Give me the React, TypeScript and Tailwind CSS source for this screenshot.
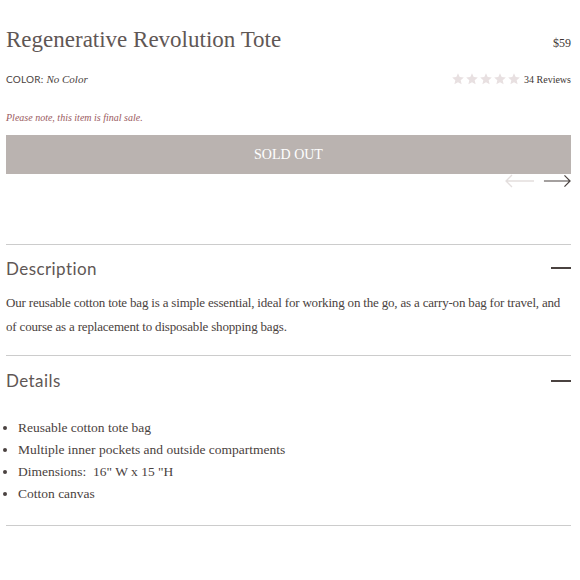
import type { JSX } from "react";

const serif = "font-['Liberation_Serif',serif]";
const sans = "font-['Lato',sans-serif]";

const Star = (): JSX.Element => (
	<svg viewBox="0 0 24 24" className="h-[14px] w-[14px]" fill="#e8e0e1">
		<path d="M12 2l2.9 6.6 7.1.7-5.4 4.8 1.6 7-6.2-3.7-6.2 3.7 1.6-7L2 9.3l7.1-.7z" />
	</svg>
);

const Minus = (): JSX.Element => <span className="block h-[2px] w-[20px] bg-[#4a4240]" />;

const details = ["Reusable cotton tote bag", "Multiple inner pockets and outside compartments", 'Dimensions:  16" W x 15 "H', "Cotton canvas"];

export default function App(): JSX.Element {
	return (
		<div className="h-[580px] w-[580px] bg-white pl-[6px] pr-[9px] pt-[26px] text-[#5a5250]">
			<div className="flex items-start justify-between">
				<h1 className={`${serif} text-[23px] leading-[28px] text-[#5f5755]`}>Regenerative Revolution Tote</h1>
				<span className={`${serif} mt-[8px] text-[12px] text-[#3d3533]`}>$59</span>
			</div>

			<div className="mt-[17px] flex items-center justify-between">
				<p className={`${sans} text-[10px] tracking-wide text-[#4a4240]`}>
					COLOR: <span className={`${serif} text-[11px] italic tracking-normal`}>No Color</span>
				</p>
				<div className="flex items-center gap-[3px]">
					<div className="flex">
						<Star />
						<Star />
						<Star />
						<Star />
						<Star />
					</div>
					<span className={`${serif} text-[10px] text-[#3d3533]`}>34 Reviews</span>
				</div>
			</div>

			<p className={`${serif} mt-[22px] text-[10px] italic text-[#9a5a5e]`}>Please note, this item is final sale.</p>

			<button className={`${serif} mt-[10px] flex h-[39px] w-full items-center justify-center bg-[#bab3b0] text-[14px] text-white`}>SOLD OUT</button>

			<div className="flex justify-end gap-[8px]">
				<svg viewBox="0 0 30 14" className="h-[14px] w-[30px]" fill="none" stroke="#e3dedd" strokeWidth={1.3}>
					<path d="M29 7H1M7 1L1 7l6 6" />
				</svg>
				<svg viewBox="0 0 30 14" className="h-[14px] w-[28px]" fill="none" stroke="#4a4240" strokeWidth={1.3}>
					<path d="M1 7h28M23 1l6 6-6 6" />
				</svg>
			</div>

			<div className="mt-[56px] border-t border-[#cccccc]">
				<div className="flex items-center justify-between pt-[11px]">
					<h2 className={`${sans} text-[17px] tracking-wide text-[#5f5755]`}>Description</h2>
					<Minus />
				</div>
				<p className={`${serif} mt-[10px] text-[13px] leading-[24px] tracking-[-0.18px] text-[#4a4240]`}>
					Our reusable cotton tote bag is a simple essential, ideal for working on the go, as a carry-on bag for travel, and of course as a replacement to disposable shopping bags.
				</p>
			</div>

			<div className="mt-[16px] border-t border-[#cccccc]">
				<div className="flex items-center justify-between pt-[12px]">
					<h2 className={`${sans} text-[17px] tracking-wide text-[#5f5755]`}>Details</h2>
					<Minus />
				</div>
				<ul className={`${serif} mt-[23px] list-disc pl-[12px] text-[13.5px] leading-[22px] text-[#4a4240]`}>
					{details.map(item => (
						<li key={item} className="whitespace-pre">
							{item}
						</li>
					))}
				</ul>
				<div className="mt-[20px] border-t border-[#cccccc]" />
			</div>
		</div>
	);
}
